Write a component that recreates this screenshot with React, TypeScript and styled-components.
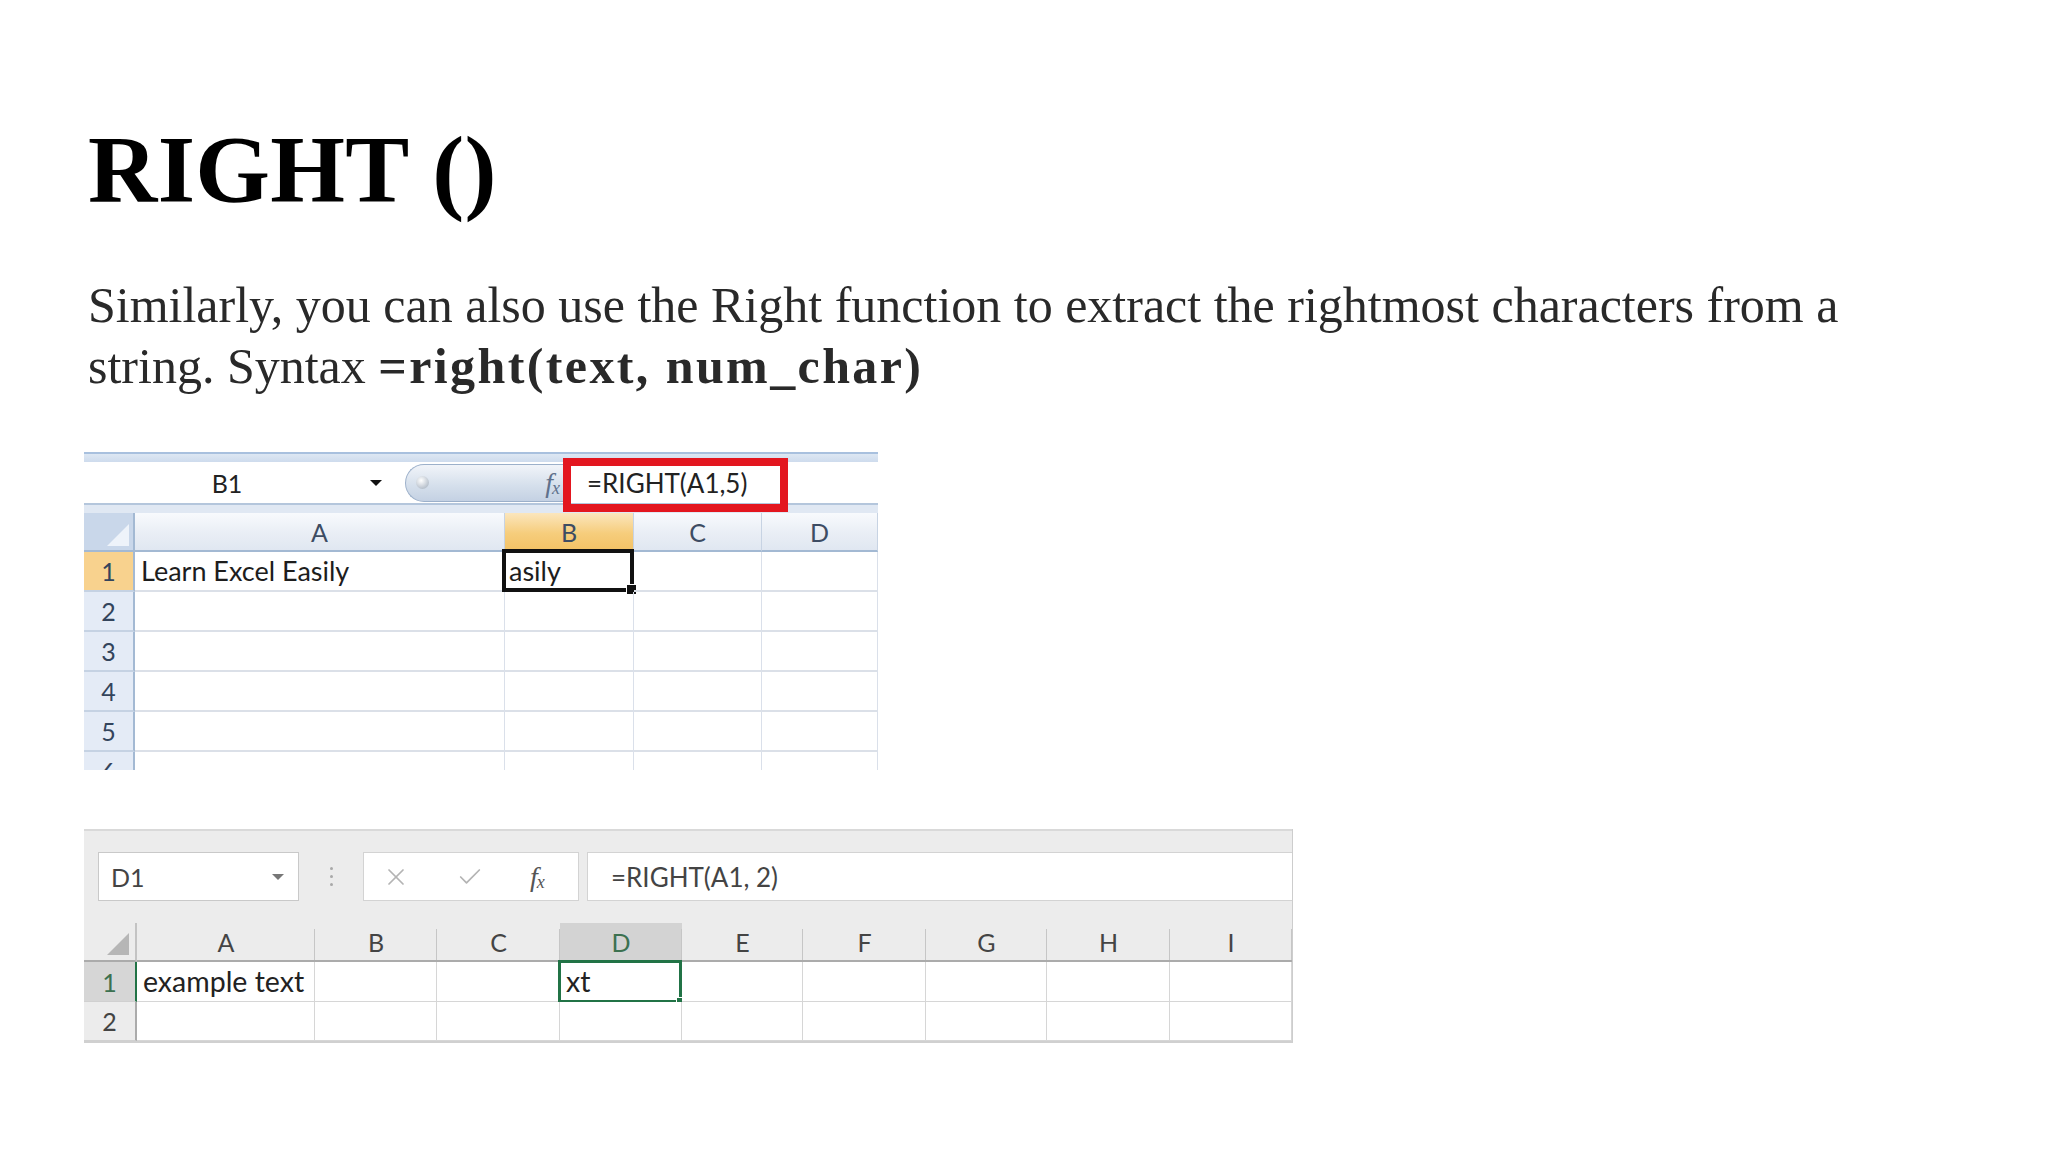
import React from "react";
import styled, { createGlobalStyle } from "styled-components";
import { X, Check } from "lucide-react";

const GlobalStyle = createGlobalStyle`
  html, body {
    margin: 0;
    padding: 0;
    background: #ffffff;
  }
  body {
    font-family: "Liberation Serif", "Times New Roman", serif;
  }
`;

const Page = styled.main`
  padding: 112px 0 60px 84px;
  display: flex;
  flex-direction: column;
  align-items: flex-start;
`;

const Title = styled.h1`
  margin: 0 0 48px 4px;
  font-family: "Liberation Serif", "Times New Roman", serif;
  font-size: 96px;
  line-height: 115px;
  font-weight: 700;
  color: #000;
  letter-spacing: 0.3px;
`;

const Lead = styled.p`
  margin: 0 0 55px 4px;
  max-width: 1800px;
  font-size: 50px;
  line-height: 61px;
  color: #292929;

  strong {
    font-weight: 700;
    letter-spacing: 2.4px;
  }
`;

const Fx = styled.span<{ $color: string }>`
  font-family: "Liberation Serif", serif;
  font-style: italic;
  font-size: 28px;
  color: ${(p) => p.$color};
  letter-spacing: -1px;

  sub {
    font-size: 18px;
    vertical-align: -2px;
  }
`;

/* ---------- Excel 2007 style sheet ---------- */

const Sheet07 = styled.div`
  width: 794px;
  height: 318px;
  overflow: hidden;
  background: #fff;
  font-family: Lato, "Open Sans", sans-serif;
  margin-bottom: 59px;
`;

const Band07 = styled.div<{ $top: string; $fill: string }>`
  height: 10px;
  box-sizing: border-box;
  border-top: 2px solid ${(p) => p.$top};
  background: ${(p) => p.$fill};
`;

const FormulaRow07 = styled.div`
  height: 41px;
  display: flex;
  align-items: center;
  background: #fff;
`;

const NameBox07 = styled.div`
  width: 311px;
  height: 100%;
  display: flex;
  align-items: center;
`;

const NameLabel07 = styled.span`
  width: 286px;
  text-align: center;
  font-size: 25px;
  color: #222;
`;

const DropArrow = styled.span<{ $color: string; $size: number }>`
  width: 0;
  height: 0;
  border-left: ${(p) => p.$size}px solid transparent;
  border-right: ${(p) => p.$size}px solid transparent;
  border-top: ${(p) => p.$size}px solid ${(p) => p.$color};
`;

const Pill07 = styled.div`
  position: relative;
  margin-left: 10px;
  width: 158px;
  height: 38px;
  box-sizing: border-box;
  border: 1px solid #9cb0ca;
  border-right: none;
  border-radius: 20px 0 0 20px;
  background: linear-gradient(#f1f4f9, #d6e0ec 55%, #c4d1e3);
  display: flex;
  align-items: center;
  justify-content: flex-end;
  padding-right: 4px;

  &::before {
    content: "";
    position: absolute;
    left: 10px;
    top: 11px;
    width: 13px;
    height: 13px;
    border-radius: 50%;
    background: radial-gradient(circle at 40% 35%, #ffffff, #b9c2cd 70%);
  }
`;

const FormulaInput07 = styled.div`
  position: relative;
  flex: 1;
  height: 100%;
  display: flex;
  align-items: center;
  padding-left: 24px;
  font-size: 26px;
  color: #222;
`;

const RedMark = styled.span`
  position: absolute;
  left: 0;
  top: -4px;
  width: 225px;
  height: 54px;
  box-sizing: border-box;
  border: 8px solid #e3161f;
  pointer-events: none;
`;

const Grid07 = styled.div`
  display: grid;
  grid-template-columns: 51px 370px 129px 128px 116px;
  grid-template-rows: 39px repeat(6, 40px);
`;

const Corner07 = styled.div`
  position: relative;
  background: #c9d7ea;
  border-right: 2px solid #a3b9d3;
  border-bottom: 2px solid #a3b9d3;

  &::after {
    content: "";
    position: absolute;
    right: 4px;
    bottom: 4px;
    width: 22px;
    height: 22px;
    background: #eef3fa;
    clip-path: polygon(100% 0, 100% 100%, 0 100%);
  }
`;

const ColHead07 = styled.div<{ $active?: boolean }>`
  display: flex;
  align-items: center;
  justify-content: center;
  font-size: 25px;
  color: #3d4c63;
  border-right: 1px solid #c7d3e3;
  border-bottom: 2px solid ${(p) => (p.$active ? "#e3a73c" : "#a3b9d3")};
  background: ${(p) =>
    p.$active
      ? "linear-gradient(#fbe6bd, #f6cd7c 55%, #f3c266)"
      : "linear-gradient(#f8fafd, #e9eef5 55%, #e0e7f1)"};
`;

const RowHead07 = styled.div<{ $active?: boolean }>`
  display: flex;
  align-items: center;
  justify-content: center;
  font-size: 25px;
  color: #33445c;
  border-right: 2px solid #a3b9d3;
  border-bottom: 2px solid #c5d2e3;
  background: ${(p) => (p.$active ? "#f8d28e" : "#e4ebf6")};
`;

const Cell07 = styled.div<{ $selected?: boolean }>`
  position: relative;
  display: flex;
  align-items: flex-end;
  padding: 0 0 3px 6px;
  font-size: 27px;
  color: #1d1d1d;
  white-space: nowrap;
  border-right: 1px solid #dae0ea;
  border-bottom: 2px solid #dbe0e8;

  ${(p) =>
    p.$selected &&
    `
    padding-left: 4px;
    &::before {
      content: "";
      position: absolute;
      left: -3px;
      top: -3px;
      right: -1px;
      bottom: -2px;
      border: 4px solid #111;
    }
    &::after {
      content: "";
      position: absolute;
      right: -4px;
      bottom: -5px;
      width: 9px;
      height: 9px;
      background: #111;
      border: 1px solid #fff;
    }
  `}
`;

/* ---------- Excel 2016 style sheet ---------- */

const Sheet16 = styled.div`
  width: 1209px;
  box-sizing: border-box;
  border-right: 1px solid #cdcdcd;
  border-bottom: 2px solid #d0d0d0;
  background: #fff;
  font-family: Lato, "Open Sans", sans-serif;
`;

const Toolbar16 = styled.div`
  height: 94px;
  box-sizing: border-box;
  border-top: 2px solid #d9d9d9;
  background: #ececec;
  display: flex;
  align-items: flex-start;
  padding: 21px 0 0 14px;
`;

const NameBox16 = styled.div`
  width: 201px;
  height: 49px;
  box-sizing: border-box;
  border: 1px solid #c9c9c9;
  background: #fff;
  display: flex;
  align-items: center;
  justify-content: space-between;
  padding: 0 14px 0 12px;
  font-size: 25px;
  color: #444;
`;

const Grip16 = styled.div`
  width: 64px;
  height: 49px;
  display: flex;
  flex-direction: column;
  align-items: center;
  justify-content: center;
  gap: 5px;

  span {
    width: 3px;
    height: 3px;
    border-radius: 50%;
    background: #a9a9a9;
  }
`;

const ToolButtons16 = styled.div`
  width: 216px;
  height: 49px;
  box-sizing: border-box;
  border: 1px solid #d3d3d3;
  background: #fff;
  display: flex;
  align-items: center;
  padding-left: 18px;
  gap: 46px;
  color: #b4b4b4;
`;

const FormulaBox16 = styled.div`
  flex: 1;
  margin-left: 8px;
  height: 49px;
  box-sizing: border-box;
  border: 1px solid #d3d3d3;
  border-right: none;
  background: #fff;
  display: flex;
  align-items: center;
  padding-left: 23px;
  font-size: 26px;
  color: #444;
`;

const Grid16 = styled.div`
  display: grid;
  grid-template-columns: 53px 178px 122px 123px 122px 121px 123px 121px 123px 122px;
  grid-template-rows: 39px 40px 39px;
  background: #ececec;
`;

const Corner16 = styled.div`
  position: relative;
  border-bottom: 2px solid #ababab;
  border-right: 2px solid #c3c3c3;

  &::after {
    content: "";
    position: absolute;
    right: 6px;
    bottom: 5px;
    width: 22px;
    height: 22px;
    background: #b6b6b6;
    clip-path: polygon(100% 0, 100% 100%, 0 100%);
  }
`;

const ColHead16 = styled.div<{ $active?: boolean }>`
  position: relative;
  display: flex;
  align-items: center;
  justify-content: center;
  font-size: 25px;
  color: ${(p) => (p.$active ? "#3c7150" : "#444")};
  background: ${(p) => (p.$active ? "#d3d3d3" : "#ececec")};
  border-bottom: 2px solid ${(p) => (p.$active ? "#217346" : "#ababab")};

  &::after {
    content: "";
    position: absolute;
    right: 0;
    top: 6px;
    bottom: 0;
    width: 1px;
    background: #c6c6c6;
  }
`;

const RowHead16 = styled.div<{ $active?: boolean }>`
  display: flex;
  align-items: center;
  justify-content: center;
  font-size: 25px;
  color: ${(p) => (p.$active ? "#3c7150" : "#444")};
  background: ${(p) => (p.$active ? "#d6d6d6" : "#ececec")};
  border-right: 2px solid ${(p) => (p.$active ? "#217346" : "#ababab")};
  border-bottom: 1px solid #d0d0d0;
`;

const Cell16 = styled.div<{ $selected?: boolean }>`
  position: relative;
  display: flex;
  align-items: flex-end;
  padding: 0 0 3px 6px;
  font-size: 28.5px;
  color: #222;
  white-space: nowrap;
  background: #fff;
  border-right: 1px solid #d6d6d6;
  border-bottom: 1px solid #d6d6d6;

  ${(p) =>
    p.$selected &&
    `
    &::before {
      content: "";
      position: absolute;
      left: -2px;
      top: -2px;
      right: -1px;
      bottom: -2px;
      border: 3px solid #217346;
    }
    &::after {
      content: "";
      position: absolute;
      right: -5px;
      bottom: -6px;
      width: 8px;
      height: 8px;
      background: #217346;
      border: 1px solid #fff;
    }
  `}
`;

const cols07 = ["A", "B", "C", "D"];
const cols16 = ["A", "B", "C", "D", "E", "F", "G", "H", "I"];

export default function App() {
  return (
    <>
      <GlobalStyle />
      <Page>
        <Title>RIGHT ()</Title>
        <Lead>
          Similarly, you can also use the Right function to extract the rightmost
          characters from a string. Syntax <strong>=right(text, num_char)</strong>
        </Lead>

        <Sheet07>
          <Band07 $top="#a8c0de" $fill="linear-gradient(#dde7f3, #cedbed)" />
          <FormulaRow07>
            <NameBox07>
              <NameLabel07>B1</NameLabel07>
              <DropArrow $color="#111" $size={6} />
            </NameBox07>
            <Pill07>
              <Fx $color="#60718c">
                f<sub>x</sub>
              </Fx>
            </Pill07>
            <FormulaInput07>
              =RIGHT(A1,5)
              <RedMark />
            </FormulaInput07>
          </FormulaRow07>
          <Band07 $top="#b4c6dc" $fill="#e0e8f3" />
          <Grid07>
            <Corner07 />
            {cols07.map((c) => (
              <ColHead07 key={c} $active={c === "B"}>
                {c}
              </ColHead07>
            ))}
            {[1, 2, 3, 4, 5, 6].map((r) => (
              <React.Fragment key={r}>
                <RowHead07 $active={r === 1}>{r}</RowHead07>
                <Cell07>{r === 1 ? "Learn Excel Easily" : ""}</Cell07>
                <Cell07 $selected={r === 1}>{r === 1 ? "asily" : ""}</Cell07>
                <Cell07 />
                <Cell07 />
              </React.Fragment>
            ))}
          </Grid07>
        </Sheet07>

        <Sheet16>
          <Toolbar16>
            <NameBox16>
              D1
              <DropArrow $color="#777" $size={6} />
            </NameBox16>
            <Grip16>
              <span />
              <span />
              <span />
            </Grip16>
            <ToolButtons16>
              <X size={28} strokeWidth={1.5} />
              <Check size={28} strokeWidth={1.5} />
              <Fx $color="#555">
                f<sub>x</sub>
              </Fx>
            </ToolButtons16>
            <FormulaBox16>=RIGHT(A1, 2)</FormulaBox16>
          </Toolbar16>
          <Grid16>
            <Corner16 />
            {cols16.map((c) => (
              <ColHead16 key={c} $active={c === "D"}>
                {c}
              </ColHead16>
            ))}
            {[1, 2].map((r) => (
              <React.Fragment key={r}>
                <RowHead16 $active={r === 1}>{r}</RowHead16>
                {cols16.map((c) => (
                  <Cell16 key={c} $selected={r === 1 && c === "D"}>
                    {r === 1 && c === "A" ? "example text" : ""}
                    {r === 1 && c === "D" ? "xt" : ""}
                  </Cell16>
                ))}
              </React.Fragment>
            ))}
          </Grid16>
        </Sheet16>
      </Page>
    </>
  );
}
